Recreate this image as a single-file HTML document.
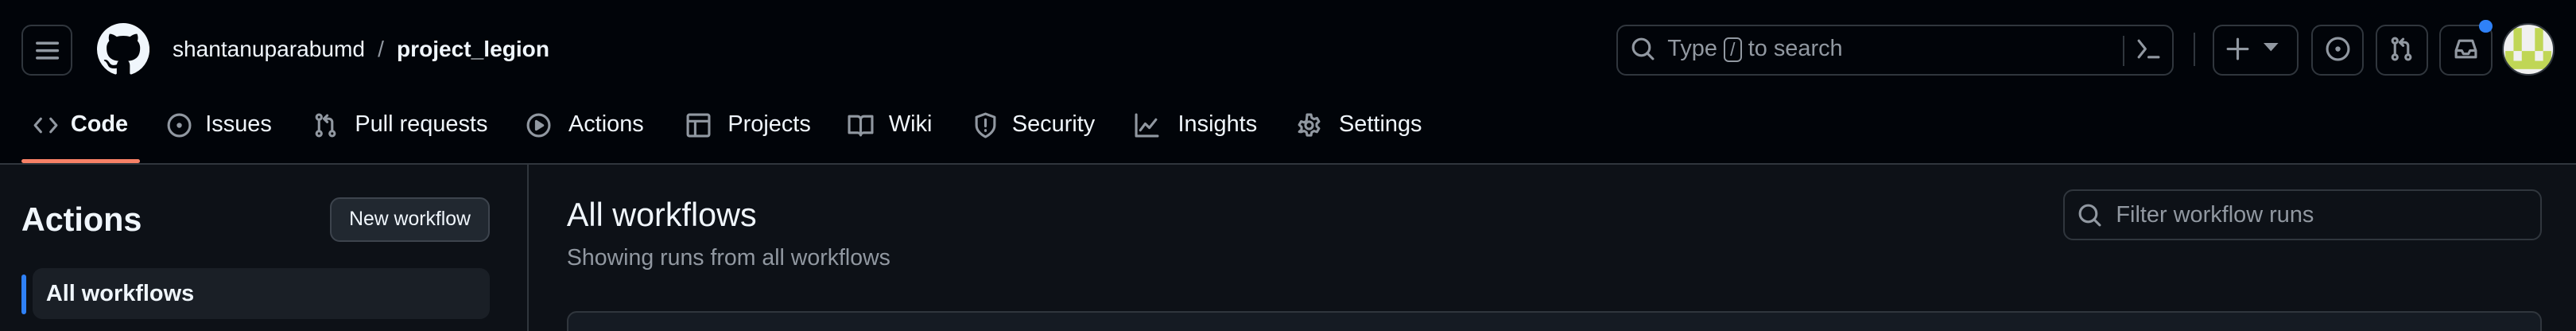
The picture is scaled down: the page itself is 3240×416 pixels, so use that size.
<!DOCTYPE html>
<html><head><meta charset="utf-8"><style>
html,body{margin:0;padding:0;background:#0d1117;width:3240px;height:416px;overflow:hidden}
#w{zoom:2.0663;width:1568px;height:201.3px;position:relative;font-family:"Liberation Sans",sans-serif;color:#f0f6fc}
.a{position:absolute}
.hdr{left:0;top:0;width:1568px;height:99px;background:#010409;border-bottom:1px solid #30363d}
.btn{position:absolute;border:1px solid #30363d;border-radius:6px;box-sizing:border-box}
.ic{position:absolute;fill:none;stroke:#9198a1;stroke-width:1.5;stroke-linecap:round;stroke-linejoin:round}
.tab{position:absolute;top:67px;font-size:14px;color:#f0f6fc;line-height:18px}
</style></head><body><div id="w">
<div class="a hdr"></div>
<div class="btn" style="left:13px;top:15px;width:31px;height:31px"></div>
<svg class="ic" style="left:20px;top:22px" width="18" height="18" viewBox="0 0 16 16"><path d="M2.5 4h11M2.5 8h11M2.5 12h11"/></svg>
<svg class="a" style="left:59px;top:14px" width="32" height="32" viewBox="0 0 16 16"><path fill="#f0f6fc" d="M8 0c4.42 0 8 3.58 8 8a8.013 8.013 0 0 1-5.45 7.590c-.4.08-.55-.17-.55-.38 0-.27.01-1.130.01-2.2 0-.75-.25-1.23-.54-1.48 1.78-.2 3.65-.88 3.65-3.95 0-.88-.31-1.59-.82-2.150.08-.2.36-1.02-.08-2.12 0 0-.67-.22-2.2.82-.64-.18-1.32-.27-2-.27-.68 0-1.36.09-2 .27-1.53-1.03-2.2-.82-2.2-.82-.44 1.1-.16 1.92-.08 2.12-.51.56-.82 1.28-.82 2.15 0 3.06 1.86 3.75 3.64 3.95-.23.2-.44.55-.51 1.07-.46.21-1.610.55-2.33-.66-.15-.24-.6-.83-1.23-.82-.67.01-.27.38.01.53.34.19.73.9.82 1.130.16.45.68 1.31 2.69.94 0 .67.01 1.3.01 1.49 0 .21-.15.45-.55.38A7.995 7.995 0 0 1 0 8c0-4.420 3.58-8 8-8Z"/></svg>
<div class="a" style="left:105px;top:21px;font-size:13.6px;line-height:18px">shantanuparabumd <span style="color:#9198a1;margin:0 4px">/</span> <b>project_legion</b></div>

<div class="btn" style="left:984px;top:15px;width:339px;height:31px"></div>
<svg class="ic" style="left:992px;top:22px" width="16" height="16" viewBox="0 0 16 16"><circle cx="7" cy="7" r="5"/><path d="M10.5 10.5 14 14"/></svg>
<div class="a" style="left:1015px;top:21px;font-size:14px;color:#9198a1;line-height:18px">Type <span style="display:inline-block;border:1px solid #9198a1;border-radius:3px;font-size:11px;line-height:13px;padding:0 3px">/</span> to search</div>
<div class="a" style="left:1292px;top:22px;width:1px;height:18px;background:#30363d"></div>
<svg class="ic" style="left:1300px;top:22px" width="16" height="16" viewBox="0 0 16 16"><path d="M2 3l4 5-4 5M8 13h6"/></svg>
<div class="a" style="left:1335px;top:20px;width:1px;height:20px;background:#30363d"></div>
<div class="btn" style="left:1347px;top:15px;width:52px;height:31px"></div>
<svg class="ic" style="left:1354px;top:22px" width="16" height="16" viewBox="0 0 16 16"><path d="M8 2v12M2 8h12"/></svg>
<svg class="a" style="left:1378px;top:26px" width="9" height="6"><path d="M0 0h9L4.5 5z" fill="#9198a1"/></svg>
<div class="btn" style="left:1407px;top:15px;width:32px;height:31px"></div>
<svg class="ic" style="left:1415px;top:22px" width="16" height="16" viewBox="0 0 16 16"><circle cx="8" cy="8" r="6.5"/><circle cx="8" cy="8" r=".8" fill="#9198a1"/></svg>
<div class="btn" style="left:1446px;top:15px;width:32px;height:31px"></div>
<svg class="ic" style="left:1454px;top:22px" width="16" height="16" viewBox="0 0 16 16"><circle cx="4" cy="3" r="1.5"/><circle cx="4" cy="13" r="1.5"/><circle cx="12" cy="13" r="1.5"/><path d="M4 4.5v7M12 11.5V6a2 2 0 0 0-2-2H7M9 2 7 4l2 2"/></svg>
<div class="btn" style="left:1485px;top:15px;width:32px;height:31px"></div>
<svg class="ic" style="left:1493px;top:22px" width="16" height="16" viewBox="0 0 16 16"><path d="M2 9 4 3h8l2 6v4H2zM2 9h3.5l1 2h3l1-2H14"/></svg>
<div class="a" style="left:1509px;top:12px;width:8px;height:8px;border-radius:50%;background:#2f81f7"></div>
<svg class="a" style="left:1523px;top:14px" width="32" height="32" viewBox="0 0 32 32"><clipPath id="c"><circle cx="16" cy="16" r="15.5"/></clipPath><g clip-path="url(#c)"><rect width="32" height="32" fill="#f0f0f0"/><rect x="7" y="3" width="5" height="14" fill="#c0d656"/><rect x="20" y="3" width="5" height="14" fill="#c0d656"/><rect x="2" y="17" width="28" height="11" fill="#c0d656"/><rect x="7" y="17" width="5" height="6" fill="#f0f0f0"/><rect x="20" y="17" width="5" height="6" fill="#f0f0f0"/></g><circle cx="16" cy="16" r="15.5" fill="none" stroke="#30363d"/></svg>

<svg class="ic" style="left:20px;top:68px" width="16" height="16" viewBox="0 0 16 16"><path d="M5 4 1.5 8 5 12M11 4l3.5 4-3.5 4"/></svg>
<div class="tab" style="left:43px;font-weight:bold">Code</div>
<div class="a" style="left:13px;top:97px;width:72px;height:2px;background:#f78166;border-radius:2px"></div>
<svg class="ic" style="left:101px;top:68px" width="16" height="16" viewBox="0 0 16 16"><circle cx="8" cy="8" r="6.5"/><circle cx="8" cy="8" r=".8" fill="#9198a1"/></svg>
<div class="tab" style="left:125px">Issues</div>
<svg class="ic" style="left:190px;top:68px" width="16" height="16" viewBox="0 0 16 16"><circle cx="4" cy="3" r="1.5"/><circle cx="4" cy="13" r="1.5"/><circle cx="12" cy="13" r="1.5"/><path d="M4 4.5v7M12 11.5V6a2 2 0 0 0-2-2H7M9 2 7 4l2 2"/></svg>
<div class="tab" style="left:216px">Pull requests</div>
<svg class="ic" style="left:320px;top:68px" width="16" height="16" viewBox="0 0 16 16"><circle cx="8" cy="8" r="6.5"/><path d="M6.5 5.5v5l4-2.5z" fill="#9198a1"/></svg>
<div class="tab" style="left:346px">Actions</div>
<svg class="ic" style="left:417px;top:68px" width="16" height="16" viewBox="0 0 16 16"><rect x="1.5" y="1.5" width="13" height="13" rx="1"/><path d="M1.5 5.5h13M6 5.5v9"/></svg>
<div class="tab" style="left:443px">Projects</div>
<svg class="ic" style="left:516px;top:68px" width="16" height="16" viewBox="0 0 16 16"><path d="M1 2.5h5a2 2 0 0 1 2 2V14a2 2 0 0 0-2-1.5H1zM15 2.5h-5a2 2 0 0 0-2 2V14a2 2 0 0 1 2-1.5h5z"/></svg>
<div class="tab" style="left:541px">Wiki</div>
<svg class="ic" style="left:592px;top:68px" width="16" height="16" viewBox="0 0 16 16"><path d="M8 1 2.5 3v5c0 3 2.5 5.5 5.5 7 3-1.5 5.5-4 5.5-7V3z"/><path d="M8 4.5v4M8 11v.3"/></svg>
<div class="tab" style="left:616px">Security</div>
<svg class="ic" style="left:690px;top:68px" width="16" height="16" viewBox="0 0 16 16"><path d="M1.5 1.5v13h13M4 11l3-4 2.5 2.5 4-5"/></svg>
<div class="tab" style="left:717px">Insights</div>
<svg class="ic" style="left:789px;top:68px" width="16" height="16" viewBox="0 0 16 16"><circle cx="8" cy="8" r="2.2"/><path d="M6.8 1.5h2.4l.4 1.9 1.4.8 1.8-.6 1.2 2.1-1.4 1.3v1.6l1.4 1.3-1.2 2.1-1.8-.6-1.4.8-.4 1.9H6.8l-.4-1.9-1.4-.8-1.8.6L2 11.9l1.4-1.3V9L2 7.7l1.2-2.1 1.8.6 1.4-.8z"/></svg>
<div class="tab" style="left:815px">Settings</div>

<div class="a" style="left:321px;top:100px;width:1px;height:102px;background:#30363d"></div>
<div class="a" style="left:13px;top:121px;font-size:20px;font-weight:bold;line-height:26px">Actions</div>
<div class="btn" style="left:201px;top:120px;width:97px;height:27px;background:#212830;border-color:#3d444d;font-size:12px;line-height:25px;text-align:center">New workflow</div>
<div class="a" style="left:13px;top:167px;width:3px;height:24px;background:#2f81f7;border-radius:2px"></div>
<div class="a" style="left:20px;top:163px;width:278px;height:31px;background:#1a1f26;border-radius:6px"></div>
<div class="a" style="left:28px;top:170px;font-size:14px;font-weight:bold;line-height:18px">All workflows</div>

<div class="a" style="left:345px;top:118px;font-size:20px;line-height:26px">All workflows</div>
<div class="a" style="left:345px;top:148px;font-size:13.8px;color:#9198a1;line-height:18px">Showing runs from all workflows</div>
<div class="btn" style="left:1256px;top:115px;width:291px;height:31px;background:#0d1117"></div>
<svg class="ic" style="left:1264px;top:123px" width="16" height="16" viewBox="0 0 16 16"><circle cx="7" cy="7" r="5"/><path d="M10.5 10.5 14 14"/></svg>
<div class="a" style="left:1288px;top:122px;font-size:14px;color:#9198a1;line-height:18px">Filter workflow runs</div>
<div class="a" style="left:345px;top:189px;width:1202px;height:20px;border:1px solid #30363d;border-radius:6px;background:#151b23;box-sizing:border-box"></div>
</div></body></html>
